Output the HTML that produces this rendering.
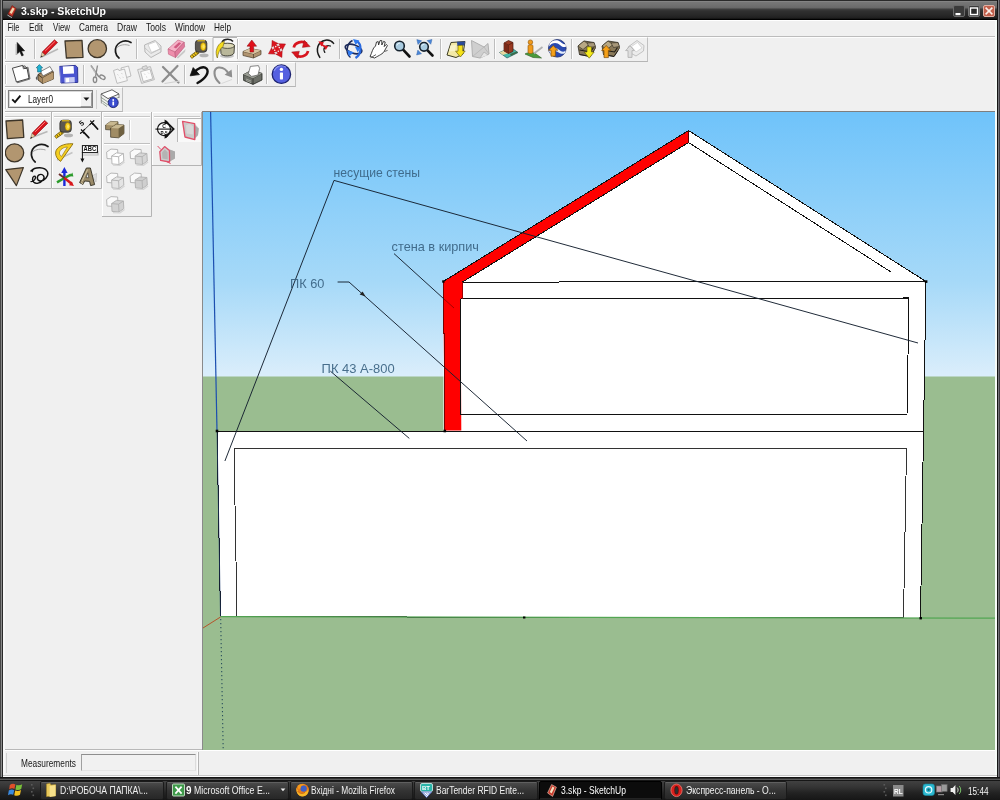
<!DOCTYPE html>
<html>
<head>
<meta charset="utf-8">
<title>3.skp - SketchUp</title>
<style>
html,body{margin:0;padding:0;}
body{width:1000px;height:800px;overflow:hidden;position:relative;background:#f0f0f0;font-family:"Liberation Sans",sans-serif;font-size:11px;color:#000;}
.abs{position:absolute;}
#titlebar{left:0;top:0;width:1000px;height:20px;background:linear-gradient(#2a2a2a 0px,#2a2a2a 0.7px,#8c8c8c 1.2px,#777 2px,#717171 5px,#696969 7.5px,#3c3c3c 9.5px,#303030 11px,#282828 15px,#1e1e1e 18.3px,#000 19px,#000 20px);}
#title{left:21px;top:3px;color:#fff;font-weight:bold;font-size:12px;letter-spacing:0.2px;text-shadow:0 0 2px #000;white-space:nowrap;}
#lborder{left:0;top:0;width:3px;height:779px;background:linear-gradient(90deg,#484848 0px,#484848 0.9px,#8a8a8a 1px,#8a8a8a 2px,#2a2a2a 2.1px,#2a2a2a 3px);}
#rborder{left:997px;top:0;width:3px;height:779px;background:linear-gradient(90deg,#161616 0px,#161616 1px,#75757a 1.1px,#75757a 2.2px,#403c42 2.3px,#403c42 3px);}
#bborder{left:0;top:775px;width:1000px;height:4px;background:linear-gradient(90deg,#484848 0px,#484848 0.9px,#8a8a8a 1px,#8a8a8a 2px,#2a2a2a 2.1px,#2a2a2a 3px,rgba(0,0,0,0) 3.1px,rgba(0,0,0,0) 997px,#161616 997.1px,#161616 998px,#75757a 998.1px,#75757a 999.2px,#403c42 999.3px) 0 0/1000px 2px no-repeat,linear-gradient(#c6c6c6 0px,#c6c6c6 0.7px,#fbfbfb 0.9px,#fbfbfb 2px,#141414 2.2px,#141414 3px,#303030 3.2px,#303030 4px);}
#menubar{left:2px;top:20px;width:995px;height:17px;background:#f0f0f0;border-top:1px solid #fff;border-bottom:1px solid #bcbcbc;box-sizing:border-box;}
.mi{position:absolute;top:22px;font-size:11px;color:#111;white-space:nowrap;}
.tb{position:absolute;background:#f0f0f0;border-top:1px solid #fff;border-bottom:1px solid #b5b5b5;border-right:1px solid #c0c0c0;box-sizing:border-box;}
.sep{position:absolute;width:1px;background:#c4c4c4;border-right:1px solid #fff;}
#viewport{left:203px;top:112px;width:792px;height:638px;overflow:hidden;will-change:transform;}
#taskbar{left:0;top:779px;width:1000px;height:21px;background:linear-gradient(#5a5a5a 0px,#5a5a5a 1px,#161616 1.2px,#161616 2px,#404040 2.4px,#343434 8px,#222 14px,#161616 21px);}
.tk{position:absolute;top:781px;height:18px;box-sizing:border-box;color:#e8e8e8;font-size:11px;white-space:nowrap;overflow:hidden;}
.tk span{position:absolute;top:2px;}
</style>
</head>
<body>
<!-- CHROME -->
<div class="abs" id="titlebar"></div>
<div class="abs" id="menubar"></div>

<!-- TOOLBARS -->
<div class="abs" style="left:3px;top:37px;width:994px;height:1px;background:#fdfdfd;"></div><div class="tb" id="tb1" style="left:3px;top:37px;width:645px;height:25px;"></div>
<div class="tb" id="tb2" style="left:3px;top:62px;width:293px;height:25px;"></div>
<div class="tb" id="tb3" style="left:3px;top:87px;width:120px;height:25px;"></div>
<!--ICONS--><svg class="abs" style="left:0;top:0;will-change:transform" width="1000" height="230" viewBox="0 0 1000 230">
<!--I1-->
<line x1="5.5" y1="39" x2="5.5" y2="59" stroke="#c8c8c8"/><line x1="6.5" y1="39" x2="6.5" y2="59" stroke="#fff"/>
<line x1="5.5" y1="65" x2="5.5" y2="84" stroke="#c8c8c8"/><line x1="6.5" y1="65" x2="6.5" y2="84" stroke="#fff"/>
<line x1="5.5" y1="90" x2="5.5" y2="109" stroke="#c8c8c8"/><line x1="6.5" y1="90" x2="6.5" y2="109" stroke="#fff"/>
<line x1="34.5" y1="39" x2="34.5" y2="59" stroke="#bdbdbd"/><line x1="35.5" y1="39" x2="35.5" y2="59" stroke="#fdfdfd"/>
<line x1="136.5" y1="39" x2="136.5" y2="59" stroke="#bdbdbd"/><line x1="137.5" y1="39" x2="137.5" y2="59" stroke="#fdfdfd"/>
<line x1="237.5" y1="39" x2="237.5" y2="59" stroke="#bdbdbd"/><line x1="238.5" y1="39" x2="238.5" y2="59" stroke="#fdfdfd"/>
<line x1="339.5" y1="39" x2="339.5" y2="59" stroke="#bdbdbd"/><line x1="340.5" y1="39" x2="340.5" y2="59" stroke="#fdfdfd"/>
<line x1="440.5" y1="39" x2="440.5" y2="59" stroke="#bdbdbd"/><line x1="441.5" y1="39" x2="441.5" y2="59" stroke="#fdfdfd"/>
<line x1="494.5" y1="39" x2="494.5" y2="59" stroke="#bdbdbd"/><line x1="495.5" y1="39" x2="495.5" y2="59" stroke="#fdfdfd"/>
<line x1="571.5" y1="39" x2="571.5" y2="59" stroke="#bdbdbd"/><line x1="572.5" y1="39" x2="572.5" y2="59" stroke="#fdfdfd"/>
<line x1="83.5" y1="65" x2="83.5" y2="84" stroke="#bdbdbd"/><line x1="84.5" y1="65" x2="84.5" y2="84" stroke="#fdfdfd"/>
<line x1="184.5" y1="65" x2="184.5" y2="84" stroke="#bdbdbd"/><line x1="185.5" y1="65" x2="185.5" y2="84" stroke="#fdfdfd"/>
<line x1="237.5" y1="65" x2="237.5" y2="84" stroke="#bdbdbd"/><line x1="238.5" y1="65" x2="238.5" y2="84" stroke="#fdfdfd"/>
<line x1="266.5" y1="65" x2="266.5" y2="84" stroke="#bdbdbd"/><line x1="267.5" y1="65" x2="267.5" y2="84" stroke="#fdfdfd"/>
<path d="M17.2,42.5 L17.2,54 L19.8,51.6 L21.8,56 L23.4,55.2 L21.4,51 L24.6,50.8 Z" fill="#111" stroke="#111" stroke-width="0.6"/><path d="M16,44 L16,55 L18,53" fill="none" stroke="#999" stroke-width="1" opacity="0.6"/>
<g><path d="M41.5,57 L58,49" stroke="#b8b8b8" stroke-width="1.6"/><path d="M54.5,39.8 L57.6,42.6 L45,55 L42,52.2 Z" fill="#d8141c" stroke="#8a0a10" stroke-width="0.6"/><path d="M55.2,41.2 L45.2,51" stroke="#ff8a8a" stroke-width="0.9"/><path d="M42,52.2 L45,55 L40.6,57.4 Z" fill="#e8c9a0" stroke="#5a4a3a" stroke-width="0.4"/><path d="M41.6,55.6 L40.4,57.6 L42.6,56.6Z" fill="#222"/></g>
<path d="M65,41 L82,40.3 L83,57.4 L66.4,58 Z" fill="#b29670" stroke="#3c3428" stroke-width="1.3" stroke-linejoin="round"/>
<ellipse cx="97.3" cy="48.7" rx="9.2" ry="9" fill="#b29670" stroke="#3c3428" stroke-width="1.3"/>
<path d="M131,42.5 C124,38.5 114.5,43 115.5,52 C116,55 117.5,57 119,58" fill="none" stroke="#1a1a1a" stroke-width="1.7" stroke-linecap="round"/><path d="M116.5,48 C120,44.5 125,44 129.5,45.5" fill="none" stroke="#999" stroke-width="0.9"/>
<g opacity="0.9"><path d="M144.5,45 L155,40.5 L161,46 L161,52 L151,57.5 L145,52 Z" fill="#e9e9e9" stroke="#b0b0b0" stroke-width="1"/><path d="M148,44.5 L156,41.6 L160,49 L151.5,52.5 Z" fill="#fff" stroke="#c4c4c4" stroke-width="0.8"/><path d="M145,48 L151,53.5 L161,48.5" fill="none" stroke="#b8b8b8" stroke-width="0.8"/></g>
<g><path d="M176.5,57.6 L185.6,49 L185,52 L178,58.4Z" fill="#c8c8c8"/><path d="M168,49 L178,40 L184.2,42.2 L175,52Z" fill="#f6b0c6" stroke="#c0607e" stroke-width="0.6" stroke-linejoin="round"/><path d="M168,49 L175,52 L175.5,57.6 L168.5,54.2Z" fill="#ee8eac" stroke="#c0607e" stroke-width="0.6" stroke-linejoin="round"/><path d="M175,52 L184.2,42.2 L184.6,46.8 L175.5,57.6Z" fill="#e07a9c" stroke="#b85474" stroke-width="0.6" stroke-linejoin="round"/><path d="M173.6,47.2 L179,42.2 L181.2,43.2 L176,48.4Z" fill="#d05a80"/></g>
<g><ellipse cx="204" cy="55.4" rx="4.6" ry="1.8" fill="#b4b4b4"/><path d="M196.8,50.8 L190.2,56 L191.8,58.4 L199,53.2 Z" fill="#f2c81a" stroke="#5a480c" stroke-width="0.7"/><path d="M192.4,54.8 L193.8,57 M194.4,53.4 L195.8,55.6 M196.4,52 L197.6,54" stroke="#3a2e06" stroke-width="0.7"/><rect x="195.4" y="40.2" width="11.4" height="12" rx="3" fill="#5c5850" stroke="#2a2824" stroke-width="0.8"/><path d="M197.4,40.8 L205,40.8" stroke="#e8c01c" stroke-width="1.2"/><ellipse cx="203.2" cy="46.6" rx="2.7" ry="4" fill="#f7cf1c" stroke="#8a680c" stroke-width="0.6"/><ellipse cx="203.6" cy="46.6" rx="1.1" ry="2" fill="#fbe46a"/></g>
<rect x="213" y="37" width="24" height="24" fill="#f8f8f8"/><path d="M213,61 L213,37.5 L237,37.5" fill="none" stroke="#b4b4b4" stroke-width="1"/>
<g><ellipse cx="227" cy="56" rx="7" ry="2.2" fill="#c4c4c4"/><path d="M220.5,46 C220.5,43.5 234,42.5 234.5,45.5 L234,53 C233,56.5 222,57 221,53.6 Z" fill="#b9b79a" stroke="#3a3a30" stroke-width="0.9"/><ellipse cx="227.5" cy="45.8" rx="7" ry="2.6" fill="#ddd9b6" stroke="#3a3a30" stroke-width="0.8"/><path d="M222,42 C224,38.5 231,38.5 233,41.5" fill="none" stroke="#222" stroke-width="1.5"/><path d="M224.5,41.5 C220,42 217,46 216.2,51.5 C216,54 216.6,57 217.4,58 C217.8,54 219.6,49 223,46.5 Z" fill="#f5dc1e" stroke="#6a5c10" stroke-width="0.6"/></g>
<g><path d="M243,51.5 L250,48.5 L261,50.5 L261,54.5 L253.5,58 L243,55.5 Z" fill="#b09470" stroke="#4a3c2a" stroke-width="0.7"/><path d="M243,51.5 L253.5,54 L261,50.5 M253.5,54 L253.5,58" fill="none" stroke="#4a3c2a" stroke-width="0.7"/><path d="M243,51.5 L250,48.5 L261,50.5 L253.5,54 Z" fill="#d6c3a0"/><path d="M251.8,40 L256.6,46.2 L253.6,46.2 L253.6,52 L250,52 L250,46.2 L247,46.2 Z" fill="#e0101a" stroke="#8a0a10" stroke-width="0.5"/></g>
<g><path d="M274.5,48.2 L273.5,45.6 L271.8,47.3 L272.1,40.4 L278.2,43.6 L275.9,44.2 L277.7,46.4 L277.7,46.4 L280.3,45.4 L278.6,43.7 L285.5,44.0 L282.3,50.1 L281.7,47.8 L279.5,49.6 L279.5,49.6 L280.5,52.2 L282.2,50.5 L281.9,57.4 L275.8,54.2 L278.1,53.6 L276.3,51.4 L276.3,51.4 L273.7,52.4 L275.4,54.1 L268.5,53.8 L271.7,47.7 L272.3,50.0 L274.5,48.2Z" fill="#dc141e" stroke="#a00a12" stroke-width="0.5" stroke-linejoin="round"/><circle cx="275.7" cy="46.6" r="0.8" fill="#fff" opacity="0.9"/><circle cx="279.3" cy="47.6" r="0.8" fill="#fff" opacity="0.9"/><circle cx="278.3" cy="51.2" r="0.8" fill="#fff" opacity="0.9"/><circle cx="274.7" cy="50.2" r="0.8" fill="#fff" opacity="0.9"/></g>
<g fill="none" stroke="#d8141e" stroke-width="2.7"><path d="M293.8,47.6 C294.8,42.4 302.4,40.2 306.6,43.8"/><path d="M308,51 C307,56.4 299.4,58.4 295.2,54.8"/></g><path d="M304.2,40.2 L310.2,46.6 L302.4,47.4 Z" fill="#d8141e" stroke="#8a0a10" stroke-width="0.4"/><path d="M297.6,58.4 L291.6,52 L299.4,51.2 Z" fill="#d8141e" stroke="#8a0a10" stroke-width="0.4"/>
<g fill="none" stroke-linecap="round"><path d="M319.8,57.4 C315,50 317.6,41.6 325.6,40.2 C329,39.8 332,41.4 333.6,43.4" stroke="#1a1a1a" stroke-width="1.5"/><path d="M324.8,52.4 C322.4,48 325.6,44.4 330.4,46" stroke="#1a1a1a" stroke-width="1.3"/></g><path d="M318.4,41.2 L324,42.2 L321.4,46.6 Z" fill="#dc141e"/><path d="M321,44 L324.4,46.4" stroke="#dc141e" stroke-width="1.6"/><path d="M323,45.2 L328.2,46 L325.8,50 Z" fill="#dc141e"/>
<g fill="none"><ellipse cx="353.5" cy="49" rx="8.6" ry="4.2" transform="rotate(18 353.5 49)" stroke="#1c2a5a" stroke-width="1.7"/><path d="M356.5,41 C362,44 362,54 355.5,58" stroke="#2a6ae0" stroke-width="2.2"/><path d="M350.5,57.5 C345.5,53.5 346,44 352.5,40.5" stroke="#1c2a5a" stroke-width="1.5"/></g><path d="M353,39 L359.4,40.4 L355.6,45 Z" fill="#2f7af0"/><path d="M347.2,50 L353.8,52.2 L349,56.6 Z" fill="#2f7af0"/><path d="M360.4,47.6 L354.8,46.4 L357.8,52.6Z" fill="#2f7af0"/>
<g><path d="M370,56.5 C372,53 372.5,48 375.5,46 L376.5,42 L378.2,41.6 L378.6,45 L380,40.6 L381.8,40.6 L381.8,45 L383.6,41.4 L385.2,42 L384.2,46.6 L386.4,44.4 L387.4,45.6 L384.4,51 C383.4,53.6 379,55.4 374.6,58 Z" fill="#fff" stroke="#2a2a2a" stroke-width="0.9" stroke-linejoin="round"/><path d="M370.6,57.8 L376,54.6 M384.2,51.6 L387.6,50.4" stroke="#555" stroke-width="0.9" fill="none"/></g>
<line x1="402.86" y1="49.36" x2="409.5" y2="56.5" stroke="#111" stroke-width="2.6" stroke-linecap="round"/><circle cx="399.5" cy="46" r="4.8" fill="#a9cbe0" stroke="#16222e" stroke-width="1.6"/><path d="M396.86,45.52 A2.88,2.88 0 0 1 399.98,43.12" stroke="#e4f2fa" stroke-width="1" fill="none"/>
<line x1="427.01" y1="49.809999999999995" x2="432.5" y2="55.5" stroke="#111" stroke-width="2.6" stroke-linecap="round"/><circle cx="424" cy="46.8" r="4.3" fill="#a9cbe0" stroke="#16222e" stroke-width="1.6"/><path d="M421.635,46.37 A2.5799999999999996,2.5799999999999996 0 0 1 424.43,44.22" stroke="#e4f2fa" stroke-width="1" fill="none"/>
<path d="M416.8,39.6 L421.7,40.8 L418.0,44.5 Z" fill="#4a86d8" stroke="#2a5aa0" stroke-width="0.4"/>
<path d="M432.0,39.4 L430.8,44.3 L427.1,40.6 Z" fill="#4a86d8" stroke="#2a5aa0" stroke-width="0.4"/>
<path d="M416.6,55.0 L417.8,50.1 L421.5,53.8 Z" fill="#4a86d8" stroke="#2a5aa0" stroke-width="0.4"/>
<g><path d="M447,55 L451,42.5 L465,41.5 L463,54 L456,57.5 Z" fill="#f3e9a6" stroke="#3a3a20" stroke-width="1"/><path d="M450.4,45.5 L456,45 L455,51 L449,51.4Z" fill="#f9f3c8"/><path d="M457,41.8 L465,41.4 L464.4,45.6 L457.4,46 Z" fill="#2a4a9a"/><path d="M458,45.4 L462.6,45.2 L462.6,51 L465.2,51 L460.4,57 L455.6,51.2 L458,51.2 Z" fill="#f5e21a" stroke="#5a5208" stroke-width="0.6"/></g>
<g><path d="M471.5,40.5 L484,47 L488,43.5 L489,54 L480,58 L472.5,56.5 Z" fill="#cfcfcf" stroke="#a9a9a9" stroke-width="0.9"/><path d="M472.5,56.5 L484,47 L489,54" fill="none" stroke="#b5b5b5" stroke-width="0.8"/><path d="M480,58 L484,52 L488,55" fill="#e6e6e6" stroke="#aaa" stroke-width="0.7"/></g>
<g><path d="M499.5,52.5 L511,47.5 L518,52.5 L507,58 Z" fill="#44b8a8" stroke="#2a5a5a" stroke-width="0.7"/><path d="M499.5,52.5 L509,48.4 L511.5,52 L503,55 Z" fill="#e8d8a0"/><path d="M510,54 L516.5,51.6 L518,52.5 L511,56 Z" fill="#3a6a4a"/><path d="M504,43 L508.5,40.5 L513,42.5 L513,51.5 L508.5,53.5 L504,51 Z" fill="#9a3a22" stroke="#4a1a10" stroke-width="0.7"/><path d="M504,43 L508.5,45 L513,42.5 M508.5,45 L508.5,53.5" fill="none" stroke="#4a1a10" stroke-width="0.7"/><path d="M504,43 L508.5,45 L508.5,53.5 L504,51Z" fill="#7a2a18"/></g>
<g><path d="M525,54 C528,52 534,52 536,54 L541.5,58 L533,57.5 Z" fill="#4a9a3a" stroke="#2a5a22" stroke-width="0.6"/><path d="M534,53.5 L542.5,47" stroke="#b0b0b0" stroke-width="1.8"/><circle cx="530.4" cy="42.2" r="2.3" fill="#f09a1c" stroke="#8a5208" stroke-width="0.6"/><path d="M528,45.5 C528,44.5 533,44.5 533,45.5 L533,52 C533,54 528,54 528,52 Z" fill="#f09a1c" stroke="#8a5208" stroke-width="0.6"/></g>
<g><circle cx="557.3" cy="48.3" r="8.8" fill="#2a4ab0" stroke="#1a2a6a" stroke-width="0.8"/><path d="M549,46.5 C552,42 557,42 560,45 C562.5,47.5 565,47.5 566,46.5 L565.6,44 C563.6,44.8 562,43.2 560,41.6 C556.6,39 551.4,40.6 549.6,43.8 Z" fill="#fff"/><path d="M549,51 C552,47 556.4,47.4 559,49.8 C561.6,52.2 564.4,52 565.8,50.6 L565,53 C563,54.4 560.6,54 558.6,52.4 C555.8,50.2 552.6,51 550.4,54 Z" fill="#e4ecfa"/><path d="M548.6,50.2 L553.2,45.6 L557.8,50.2 L555.4,50.2 L555.4,56.2 L551,56.2 L551,50.2 Z" fill="#f5a018" stroke="#7a4a08" stroke-width="0.7"/></g>
<g><path d="M578,46 L584,41 L594,42.5 L595.5,48 L590,56.5 L579.5,54.5 Z" fill="#8a7a5a" stroke="#2e2a20" stroke-width="0.8"/><path d="M578,46 L583,49.5 L589,44.5 L584,41Z" fill="#b8a884" stroke="#2e2a20" stroke-width="0.6"/><path d="M587,43 L594,42.5 L595.5,46.5 L589.5,47.5Z" fill="#a8987a" stroke="#2e2a20" stroke-width="0.6"/><path d="M579.5,50 L590.5,52 L593.5,47.5" fill="none" stroke="#1e1a14" stroke-width="1.1"/><path d="M579.5,54.5 L590,56.5 L594,50.5" fill="none" stroke="#1e1a14" stroke-width="0.9"/></g>
<path d="M587,46.8 L591.4,46.8 L591.4,52 L594.2,52 L589.2,58.2 L584.2,52 L587,52 Z" fill="#f5ea1a" stroke="#5a5208" stroke-width="0.6"/>
<g><path d="M602,46 L608,41 L618,42.5 L619.5,48 L614,56.5 L603.5,54.5 Z" fill="#8a7a5a" stroke="#2e2a20" stroke-width="0.8"/><path d="M602,46 L607,49.5 L613,44.5 L608,41Z" fill="#b8a884" stroke="#2e2a20" stroke-width="0.6"/><path d="M611,43 L618,42.5 L619.5,46.5 L613.5,47.5Z" fill="#a8987a" stroke="#2e2a20" stroke-width="0.6"/><path d="M603.5,50 L614.5,52 L617.5,47.5" fill="none" stroke="#1e1a14" stroke-width="1.1"/><path d="M603.5,54.5 L614,56.5 L618,50.5" fill="none" stroke="#1e1a14" stroke-width="0.9"/></g>
<path d="M601.6,50.4 L606.2,45.4 L610.8,50.4 L608.4,50.4 L608.4,57.6 L604,57.6 L604,50.4 Z" fill="#f5a018" stroke="#7a4a08" stroke-width="0.7"/>
<g><path d="M628,47 L637,40.5 L644,45.5 L643.5,51 L636,56 L630.5,53 Z" fill="#ececec" stroke="#bcbcbc" stroke-width="0.9"/><path d="M631.5,46.5 L637.5,42.4 L642,48 L636,52Z" fill="#fff" stroke="#ccc" stroke-width="0.7"/><path d="M625.6,50.6 L630,45.8 L634.4,50.6 L632,50.6 L632,57.4 L628,57.4 L628,50.6 Z" fill="#dedede" stroke="#adadad" stroke-width="0.8"/></g>
<!--I2-->
<g><path d="M13.5,69 L25,65.8 L26,67.6 L28,67.2 L30,79 L17.5,82.8 Z" fill="#cfcfcf" stroke="#555" stroke-width="0.8"/><path d="M12.4,68.2 L22.6,65.4 L24.6,68.4 L27,68 L29,78.4 L16.4,82 Z" fill="#fff" stroke="#333" stroke-width="0.9" stroke-linejoin="round"/><path d="M22.6,65.4 L23.4,68.8 L27,68" fill="none" stroke="#333" stroke-width="0.7"/></g>
<g><path d="M38,74.5 L49,68.5 L53.5,72 L53.5,79 L42.5,83.5 L38,80 Z" fill="#a88a62" stroke="#2e2618" stroke-width="0.8"/><path d="M40.5,71.5 L50,66.5 L52.5,71 L43,76Z" fill="#fff" stroke="#555" stroke-width="0.7"/><path d="M38,74.5 L42.5,78 L53.5,72 M42.5,78 L42.5,83.5" fill="none" stroke="#2e2618" stroke-width="0.8"/><path d="M42.5,78 L53.5,72 L53.5,79 L42.5,83.5Z" fill="#b89a70"/><path d="M37,80.5 L38,74.5 L35.6,78Z" fill="#555"/><path d="M39.4,64.6 L42.6,67.8 L41.2,67.8 L41.2,72 L37.6,72 L37.6,67.8 L36.2,67.8 Z" fill="#1fb4d4" stroke="#0a5a70" stroke-width="0.6"/></g>
<g><path d="M59.6,66.4 L75.4,65.4 L77.6,67.4 L77.8,82.4 L61,83 Z" fill="#4a54d0" stroke="#222a8a" stroke-width="0.9" stroke-linejoin="round"/><path d="M62.8,66.6 L73.6,66 L74,73.4 L63.2,74Z" fill="#fff"/><path d="M64.4,77.4 L74.6,77 L74.8,82.4 L64.6,82.8Z" fill="#c8ccf4"/><path d="M66,78.2 L69,78.1 L69.1,82 L66.1,82.2Z" fill="#fff"/><path d="M61,83 L59.6,66.4" stroke="#8a92f0" stroke-width="0.8"/></g>
<g fill="none" stroke="#8a8a8a" stroke-width="1.35"><path d="M91,65.5 L99,77"/><path d="M97.5,65.5 L95.5,76.5"/><ellipse cx="95" cy="79.8" rx="1.7" ry="2.8"/><ellipse cx="102.4" cy="77.2" rx="2.9" ry="1.8" transform="rotate(30 102.4 77.2)"/></g><path d="M91,65.5 L95.8,72.6 L94.4,72.2Z" fill="#e0e0e0" stroke="#aaa" stroke-width="0.5"/>
<g fill="#f6f6f6" stroke="#b8b8b8" stroke-width="0.9"><path d="M121,68 L128.5,66 L131,76 L123.5,78.5Z"/><path d="M113.5,70.5 L118,69 L119,70.6 L124.5,69 L127.4,80.6 L117,83.4Z"/><path d="M117.4,74.2 L118.4,75.4 M121.4,73 L122.4,74.2 M119.4,77.4 L120.6,78.4 M122.6,76.8 L123.4,77.8" stroke="#c8c8c8" stroke-width="0.8"/></g>
<g fill="#f6f6f6" stroke="#b4b4b4" stroke-width="0.9"><path d="M137.6,69.6 L150.4,66.6 L154.4,79.6 L141.6,83.4Z" fill="#eaeaea"/><path d="M142,67 L146.4,65.6 L147.6,68.4 L143,69.8Z" fill="#ddd"/><path d="M140.6,71.6 L150,69.2 L152.8,78.8 L143.2,81.6Z" fill="#fbfbfb"/><path d="M144.2,73.6 L145.2,74.8 M148,72.6 L149,73.6 M146,76.6 L147.2,77.4" stroke="#c8c8c8" stroke-width="0.8"/></g>
<g stroke="#8c8c8c" stroke-width="2.2" stroke-linecap="round"><path d="M163,67 L178.5,82.5"/><path d="M177.5,66 L162.5,81.5"/></g><path d="M164.5,83.5 L180,81" stroke="#d0d0d0" stroke-width="1.2"/>
<path d="M197.5,83 C206,78.5 209.5,72 206.5,68.5 C203.5,65.5 197,68.5 194,73" fill="none" stroke="#111" stroke-width="2.4" stroke-linecap="round"/><path d="M190.2,75.8 L193.2,67.6 L199.4,74.6 Z" fill="#111" stroke="#111" stroke-width="0.8" stroke-linejoin="round"/>
<path d="M219.5,83 C213,77 213,68.5 218.5,67.5 C223,67 227,70.5 229,74.5" fill="none" stroke="#8e8e8e" stroke-width="2.1" stroke-linecap="round"/><path d="M232.2,77.4 L231.6,69.6 L224.6,74.8 Z" fill="#8e8e8e"/><path d="M221.5,83.5 L232,79.5" stroke="#d8d8d8" stroke-width="1"/>
<g><path d="M243.6,74.5 L252,70 L262,73.4 L262,80 L253,84.4 L243.6,80.4 Z" fill="#6c6f68" stroke="#22241f" stroke-width="0.8"/><path d="M243.6,74.5 L253,78.4 L262,73.4 M253,78.4 L253,84.4" fill="none" stroke="#22241f" stroke-width="0.7"/><path d="M243.6,74.5 L252,70 L262,73.4 L253,78.4Z" fill="#9a9d94"/><path d="M248.4,73.6 L250.4,66.4 L258.4,65.6 L259.6,68.4 L258,75 L251.6,76.4Z" fill="#fff" stroke="#555" stroke-width="0.7"/><path d="M246,79 L251,81 M246,80.6 L251,82.6" stroke="#c8cac0" stroke-width="0.6"/></g>
<circle cx="281.4" cy="74.2" r="9.2" fill="#5560e0" stroke="#1c2270" stroke-width="1.3"/><path d="M274,71 A8,8 0 0 1 286,67.2" stroke="#8a94f4" stroke-width="1.2" fill="none"/><circle cx="281.4" cy="69.4" r="1.7" fill="#fff"/><rect x="279.9" y="72.4" width="3.1" height="7" rx="0.6" fill="#fff"/>
<rect x="8.5" y="90.5" width="84" height="17" fill="#fff" stroke="#7f7f7f"/><rect x="9.5" y="91.5" width="82" height="15" fill="none" stroke="#d8d8d8"/>
<path d="M12.2,99.4 L15,102.2 L20.4,95.6" fill="none" stroke="#111" stroke-width="1.9"/>
<rect x="80" y="92" width="12" height="15" fill="#f0f0f0"/><path d="M80.5,106.5 L80.5,92.5 L91.5,92.5" fill="none" stroke="#fff"/><path d="M80.5,106.5 L91.5,106.5 L91.5,92.5" fill="none" stroke="#9a9a9a"/><path d="M83.4,97.6 L89.4,97.6 L86.4,100.8Z" fill="#111"/>
<line x1="96.5" y1="90" x2="96.5" y2="109" stroke="#d0d0d0"/>
<g><path d="M101,94 L112,89.8 L119,94 L108,98.6Z" fill="#fff" stroke="#3a3a3a" stroke-width="0.8"/><path d="M101,97.4 L108,102 L119,97.2" fill="none" stroke="#8a9a8a" stroke-width="0.9"/><path d="M101.4,100.4 L108,105 L112,103.4" fill="none" stroke="#8a9a8a" stroke-width="0.9"/><path d="M102.4,103.2 L107,106.6" fill="none" stroke="#8a9a8a" stroke-width="0.9"/><path d="M101,94 L101.4,103.4 M119,94 L119,98" stroke="#666" stroke-width="0.7"/><circle cx="113.2" cy="102.6" r="5" fill="#3a4cd0" stroke="#1c2270" stroke-width="0.9"/><circle cx="113.2" cy="100" r="0.9" fill="#fff"/><rect x="112.4" y="101.6" width="1.7" height="3.8" fill="#fff"/></g>
<!--I3-->
<rect x="3" y="112" width="49" height="77" fill="#f0f0f0"/><path d="M3.5,189 L3.5,112.5 L52,112.5" fill="none" stroke="#fff"/><path d="M3,188.5 L51.5,188.5 L51.5,112" fill="none" stroke="#b4b4b4"/><line x1="5" y1="116.5" x2="50" y2="116.5" stroke="#c8c8c8"/><line x1="5" y1="117.5" x2="50" y2="117.5" stroke="#fff"/>
<rect x="52" y="112" width="50" height="77" fill="#f0f0f0"/><path d="M52.5,189 L52.5,112.5 L102,112.5" fill="none" stroke="#fff"/><path d="M52,188.5 L101.5,188.5 L101.5,112" fill="none" stroke="#b4b4b4"/><line x1="54" y1="116.5" x2="100" y2="116.5" stroke="#c8c8c8"/><line x1="54" y1="117.5" x2="100" y2="117.5" stroke="#fff"/>
<rect x="102" y="112" width="50" height="105" fill="#f0f0f0"/><path d="M102.5,217 L102.5,112.5 L152,112.5" fill="none" stroke="#fff"/><path d="M102,216.5 L151.5,216.5 L151.5,112" fill="none" stroke="#b4b4b4"/><line x1="104" y1="116.5" x2="150" y2="116.5" stroke="#c8c8c8"/><line x1="104" y1="117.5" x2="150" y2="117.5" stroke="#fff"/>
<rect x="152" y="112" width="50" height="54" fill="#f0f0f0"/><path d="M152.5,166 L152.5,112.5 L202,112.5" fill="none" stroke="#fff"/><path d="M152,165.5 L201.5,165.5 L201.5,112" fill="none" stroke="#b4b4b4"/><line x1="154" y1="116.5" x2="200" y2="116.5" stroke="#c8c8c8"/><line x1="154" y1="117.5" x2="200" y2="117.5" stroke="#fff"/>
<path d="M6,121 L22.6,120 L23.8,137.4 L7.4,138.6 Z" fill="#b29670" stroke="#3c3428" stroke-width="1.3" stroke-linejoin="round"/>
<g><path d="M30.5,138 L47.5,131.5" stroke="#b8b8b8" stroke-width="1.6"/><path d="M44.6,120.4 L47.8,123.2 L35,136 L32,133.2 Z" fill="#d8141c" stroke="#8a0a10" stroke-width="0.6"/><path d="M45.2,121.8 L35.2,131.8" stroke="#ff8a8a" stroke-width="0.9"/><path d="M32,133.2 L35,136 L30.4,138.6 Z" fill="#e8c9a0" stroke="#5a4a3a" stroke-width="0.4"/><path d="M31.4,136.8 L30.2,138.8 L32.4,137.8Z" fill="#222"/></g>
<ellipse cx="14.5" cy="152.8" rx="9.2" ry="9" fill="#b29670" stroke="#3c3428" stroke-width="1.3"/>
<path d="M48,146.5 C41,141.5 31,146 31.4,155 C31.8,158.4 33.4,160.6 35.2,162" fill="none" stroke="#1a1a1a" stroke-width="1.7" stroke-linecap="round"/><path d="M32.5,152 C36,149 41,148.6 45.5,150" fill="none" stroke="#999" stroke-width="0.9"/>
<path d="M5.8,169.6 L23.4,167.6 L16.4,185.6 Z" fill="#b29670" stroke="#3c3428" stroke-width="1.2" stroke-linejoin="round"/>
<path d="M31,171 C35,166.5 45,166.5 47.6,172 C49,176 44,181.5 40,181 C36.5,180.4 36.6,175.6 39.6,174.6 C43,173.6 45.6,177 43,180 C40,183.4 36,184.4 33.6,182 C31,179 33.6,175 35.2,176.4 C36.4,178 34,181.6 31,181.6" fill="none" stroke="#111" stroke-width="1.4" stroke-linecap="round"/><path d="M30.6,170.2 L33.6,169.4 L32.6,172.4Z" fill="#111"/>
<g transform="translate(-135.5,80)"><ellipse cx="204" cy="55.4" rx="4.6" ry="1.8" fill="#b4b4b4"/><path d="M196.8,50.8 L190.2,56 L191.8,58.4 L199,53.2 Z" fill="#f2c81a" stroke="#5a480c" stroke-width="0.7"/><path d="M192.4,54.8 L193.8,57 M194.4,53.4 L195.8,55.6 M196.4,52 L197.6,54" stroke="#3a2e06" stroke-width="0.7"/><rect x="195.4" y="40.2" width="11.4" height="12" rx="3" fill="#5c5850" stroke="#2a2824" stroke-width="0.8"/><path d="M197.4,40.8 L205,40.8" stroke="#e8c01c" stroke-width="1.2"/><ellipse cx="203.2" cy="46.6" rx="2.7" ry="4" fill="#f7cf1c" stroke="#8a680c" stroke-width="0.6"/><ellipse cx="203.6" cy="46.6" rx="1.1" ry="2" fill="#fbe46a"/></g>
<g fill="none" stroke="#111" stroke-linecap="round"><path d="M82.8,131.3 L91.9,122.5" stroke-width="0.8"/><path d="M83.6,132.2 L88.8,137.6" stroke-width="1.7"/><path d="M92.8,123.6 L97.6,129" stroke-width="1.7"/><path d="M80.6,133.2 L84.6,129.4 M81.4,129.8 L83.8,133" stroke-width="1.3"/><path d="M89.8,124.6 L93.8,120.8 M90.6,121 L93,124.4" stroke-width="1.3"/></g><text x="0" y="0" transform="translate(81.4,126.6) rotate(-38)" font-family="Liberation Sans, sans-serif" font-size="7.5" font-weight="bold" fill="#111">5</text>
<g><path d="M57,160 L72.5,152.5" stroke="#c4c4c4" stroke-width="1.5"/><path d="M55.6,153 C55.6,147 64,143 73,143.8 L60.6,161.4 C57.6,159.6 55.6,156.4 55.6,153 Z" fill="#f5cf20" stroke="#8a6c0c" stroke-width="0.9" stroke-linejoin="round"/><path d="M59.4,153 C59.6,149.6 63.4,147.2 67.4,147 L61.6,156.4 C60.2,155.6 59.4,154.4 59.4,153Z" fill="#f0f0f0" stroke="#8a6c0c" stroke-width="0.6"/></g>
<g><path d="M83,155 L98,155 L98,151" fill="none" stroke="#bcbcbc" stroke-width="1.2"/><rect x="82.4" y="145.6" width="15" height="7" fill="#fff" stroke="#111" stroke-width="1"/><text x="83.6" y="151.4" font-family="Liberation Sans, sans-serif" font-size="6.4" font-weight="bold" fill="#111" textLength="12.6" lengthAdjust="spacingAndGlyphs">ABC</text><path d="M82.4,152 L82.4,159" stroke="#111" stroke-width="1"/><path d="M80.4,158.4 L84.4,158.4 L82.4,162.4Z" fill="#111"/></g>
<g><path d="M64.4,186 L64.4,172" stroke="#1c2ad8" stroke-width="2.4"/><path d="M61.2,173 L64.4,167 L67.6,173Z" fill="#1c2ad8"/><path d="M64.4,178 L57,182.4" stroke="#2a9a2a" stroke-width="2.4"/><path d="M64.4,178 L71,174.6" stroke="#2a9a2a" stroke-width="2.4"/><path d="M72.4,172.4 L73.4,176.6 L69.4,176.2Z" fill="#2a9a2a"/><path d="M64.4,178 L72,184" stroke="#d8181c" stroke-width="2.6"/><path d="M74,186 L69,185.2 L71.6,181.6Z" fill="#d8181c"/><path d="M64.4,178 L59,174" stroke="#6a2a2a" stroke-width="2"/></g>
<g><path d="M92,176 L96.6,173.4 L96,182Z" fill="#ddd" stroke="#bbb" stroke-width="0.6"/><path d="M79.6,182.6 L86.4,168 L90.4,168 L94.6,184.6 L90.6,185.6 L89.6,181.4 L84.6,181 L83,184.4 Z" fill="#9a8a68" stroke="#2e2a1e" stroke-width="0.9" stroke-linejoin="round"/><path d="M86,177.6 L88.8,177.8 L87.8,172.8Z" fill="#f0f0f0" stroke="#2e2a1e" stroke-width="0.6"/><path d="M82,181.4 L87.6,169.6 M81,182.6 L83.4,183.8" stroke="#d8ccaa" stroke-width="0.9" fill="none"/></g>
<g><path d="M105.6,125 L110.6,121.4 L118,121.8 L118,126 L113,130 L105.6,129.6Z" fill="#a08c64" stroke="#3e3624" stroke-width="0.7"/><path d="M110.6,128 L116.4,124.4 L124,125 L124,133.6 L118.6,137.8 L110.6,137.2Z" fill="#a08c64" stroke="#3e3624" stroke-width="0.7"/><path d="M105.6,125 L110.6,121.4 L118,121.8 L113.4,125.4Z" fill="#c8b890"/><path d="M110.6,128 L116.4,124.4 L124,125 L118.6,128.6Z" fill="#c8b890"/><path d="M118.6,128.6 L118.6,137.8 L124,133.6 L124,125Z" fill="#6e6040"/></g>
<line x1="129.5" y1="120" x2="129.5" y2="140" stroke="#c8c8c8"/><line x1="130.5" y1="120" x2="130.5" y2="140" stroke="#fff"/>
<line x1="104" y1="143.5" x2="150" y2="143.5" stroke="#c0c0c0"/><line x1="104" y1="144.5" x2="150" y2="144.5" stroke="#fff"/>
<g fill="#fafafa" stroke="#b0b0b0" stroke-width="0.9"><path d="M106.6,152.1 L111,149.1 L117.6,149.5 L118,156.1 L113.4,158.9 L107,158.5 Z"/><path d="M111.6,156.1 L116.4,152.9 L123.4,153.5 L123.8,161.1 L119,164.5 L112,163.9 Z" fill="#fff"/><path d="M111.6,156.1 L118.6,156.7 L123.4,153.5 M118.6,156.7 L119,164.5" fill="none"/><path d="M113,165.1 L120,165.5 L124.6,162.1" fill="none" stroke="#d4d4d4" stroke-width="1.2"/></g>
<g fill="#fafafa" stroke="#b0b0b0" stroke-width="0.9"><path d="M130.1,152.1 L134.5,149.1 L141.1,149.5 L141.5,156.1 L136.9,158.9 L130.5,158.5 Z"/><path d="M135.1,156.1 L139.9,152.9 L146.9,153.5 L147.3,161.1 L142.5,164.5 L135.5,163.9 Z" fill="#d6d6d6"/><path d="M135.1,156.1 L142.1,156.7 L146.9,153.5 M142.1,156.7 L142.5,164.5" fill="none"/><path d="M136.5,165.1 L143.5,165.5 L148.1,162.1" fill="none" stroke="#d4d4d4" stroke-width="1.2"/></g>
<g fill="#fafafa" stroke="#b0b0b0" stroke-width="0.9"><path d="M106.6,176.1 L111,173.1 L117.6,173.5 L118,180.1 L113.4,182.9 L107,182.5 Z"/><path d="M111.6,180.1 L116.4,176.9 L123.4,177.5 L123.8,185.1 L119,188.5 L112,187.9 Z" fill="#e4e4e4"/><path d="M111.6,180.1 L118.6,180.7 L123.4,177.5 M118.6,180.7 L119,188.5" fill="none"/><path d="M113,189.1 L120,189.5 L124.6,186.1" fill="none" stroke="#d4d4d4" stroke-width="1.2"/></g>
<g fill="#fafafa" stroke="#b0b0b0" stroke-width="0.9"><path d="M130.1,176.1 L134.5,173.1 L141.1,173.5 L141.5,180.1 L136.9,182.9 L130.5,182.5 Z"/><path d="M135.1,180.1 L139.9,176.9 L146.9,177.5 L147.3,185.1 L142.5,188.5 L135.5,187.9 Z" fill="#cfcfcf"/><path d="M135.1,180.1 L142.1,180.7 L146.9,177.5 M142.1,180.7 L142.5,188.5" fill="none"/><path d="M136.5,189.1 L143.5,189.5 L148.1,186.1" fill="none" stroke="#d4d4d4" stroke-width="1.2"/></g>
<g fill="#fafafa" stroke="#b0b0b0" stroke-width="0.9"><path d="M106.6,199.6 L111,196.6 L117.6,197 L118,203.6 L113.4,206.4 L107,206 Z"/><path d="M111.6,203.6 L116.4,200.4 L123.4,201 L123.8,208.6 L119,212 L112,211.4 Z" fill="#d2d2d2"/><path d="M111.6,203.6 L118.6,204.2 L123.4,201 M118.6,204.2 L119,212" fill="none"/><path d="M113,212.6 L120,213 L124.6,209.6" fill="none" stroke="#d4d4d4" stroke-width="1.2"/></g>
<g><circle cx="164" cy="129.1" r="6.5" fill="#fff" stroke="#111" stroke-width="1.1"/><path d="M155.4,129.1 L173,129.1" stroke="#111" stroke-width="1.1"/><path d="M165.4,120.8 L173.8,129.1 L165.4,137.6" fill="none" stroke="#111" stroke-width="1.5" stroke-linejoin="miter"/><path d="M164.6,119.6 L168.6,122.6 L164.6,124.6Z M164.6,138.8 L168.6,135.8 L164.6,133.8Z" fill="#111"/><text x="162.2" y="127.6" font-family="Liberation Sans, sans-serif" font-size="5" font-weight="bold" fill="#111">C</text><text x="160.4" y="134.6" font-family="Liberation Sans, sans-serif" font-size="4.6" font-weight="bold" fill="#111">P-5</text></g>
<rect x="177.5" y="118" width="23.5" height="24" fill="#f9f9f9"/><path d="M177.5,142 L177.5,118.5 L201,118.5" fill="none" stroke="#b8b8b8"/>
<g><path d="M183,122 L195,124 L199,128.5 L198,135.5 L194.4,139.4 L185,136.6Z" fill="#c9c9c9"/><path d="M186,125.4 L189.4,123.6 L193,126.6 L193,134.4 L186.6,133.4Z" fill="#d8d8d8"/><path d="M194,125 L198.6,128.6 L198,135 L194.4,138.6Z" fill="#aaa"/><path d="M182.6,121.4 L194.6,123.6 L194.8,139.6 L185,137Z" fill="none" stroke="#e0506a" stroke-width="1.4" stroke-linejoin="round"/></g>
<g><path d="M159.6,151.6 L164.6,146.4 L169.6,149.6 L175,151.6 L175,158.6 L168,162.6 L160.6,160.6Z" fill="#cdcdcd"/><path d="M162,152.6 L164.8,149.6 L167.6,152 L167.8,159.4 L162.4,158.4Z" fill="#b4b4b4"/><path d="M169.6,149.6 L175,151.6 L175,158.6 L169.6,161.4Z" fill="#aaa"/><path d="M159.8,151.8 L164.6,146.6 L169.4,150.4 L169.6,162 L160.6,160.4Z" fill="none" stroke="#e0506a" stroke-width="1.3" stroke-linejoin="round"/><path d="M157.6,146 L161,149.6 M166.6,161.6 L170.6,163.6" stroke="#e0506a" stroke-width="1"/></g>
</svg><!--/ICONS-->

<!-- VIEWPORT -->
<div class="abs" style="left:202px;top:111px;width:795px;height:640px;box-sizing:border-box;border-left:1px solid #8a8a8a;border-top:1px solid #7e7e7e;border-right:2px solid #fbfbfb;border-bottom:1px solid #fff;"></div>
<div class="abs" id="viewport">
<svg width="792" height="638" viewBox="203 112 792 638">
<defs>
<linearGradient id="sky" x1="0" y1="112" x2="0" y2="377" gradientUnits="userSpaceOnUse">
<stop offset="0" stop-color="#6fc3fa"/>
<stop offset="0.64" stop-color="#a6d9f8"/>
<stop offset="1" stop-color="#dbeefb"/>
</linearGradient>
</defs>
<rect x="203" y="112" width="792" height="265" fill="url(#sky)"/>
<rect x="203" y="376.5" width="792" height="374" fill="#9abd90"/>

<!-- house fill -->
<polygon points="688.5,130.5 926,281.5 923.5,431 920.5,618 220.5,616.5 217,431 443.5,431 443.5,281.5" fill="#fff"/>
<!-- red roof band + wall -->
<polygon points="443.2,281.5 688.5,130.5 688.5,142.5 462.5,282 462.3,299 460.6,299 461.3,430.6 444.6,430.6" fill="#ff0000"/>
<g fill="none" stroke="#111" stroke-width="1" stroke-linecap="butt" shape-rendering="crispEdges">
<!-- roof -->
<polyline points="443.2,281.5 688.5,130.5 926,281.5"/>
<polyline points="462.5,282 688.5,142.5 891,272"/>
<line x1="688.5" y1="130.5" x2="688.5" y2="142.5" stroke="#5a0000"/>
<!-- upper floor -->
<line x1="462" y1="282.2" x2="926" y2="281.3"/>
<polyline points="926,281.5 923.5,431 920.5,618"/>
<polygon points="460.6,299 909,298 907,414.3 461,414.3"/>
<line x1="443.6" y1="281.5" x2="444.8" y2="431" stroke="#7a0000"/>
<line x1="462.4" y1="282" x2="462.3" y2="299" stroke="#a00000"/>
<!-- mid line -->
<line x1="217" y1="431" x2="923.5" y2="431"/>
<!-- lower floor -->
<polyline points="217,431 220.5,616.5"/>
<polygon points="234,448 906.5,448 903.5,617.6 237,616.8" stroke="#333"/>
</g>
<!-- axes -->
<line x1="220.5" y1="616.7" x2="995" y2="618.2" stroke="#53a653" stroke-width="1.3"/>
<line x1="210.6" y1="112" x2="217" y2="431" stroke="#1c4fb0" stroke-width="1.2"/>
<line x1="217" y1="431" x2="220.5" y2="616.5" stroke="#1c3a70" stroke-width="1" opacity="0.6"/>
<line x1="220.5" y1="617" x2="203" y2="628" stroke="#b5532a" stroke-width="1"/>
<line x1="220.7" y1="619" x2="223.2" y2="750" stroke="#2a4f5c" stroke-width="1.1" stroke-dasharray="1.2,2.8"/>
<!-- vertex dots -->
<g fill="#000">
<rect x="442.2" y="280.3" width="2.4" height="2.4"/>
<rect x="924.8" y="280.3" width="2.6" height="2.6"/>
<rect x="215.7" y="429.7" width="2.6" height="2.6"/>
<rect x="443.5" y="429.7" width="2.6" height="2.6"/>
<rect x="919.5" y="617" width="2.4" height="2.4"/>
<rect x="523" y="616.5" width="2.4" height="2"/>
</g>
<!-- leaders -->
<g fill="none" stroke="#14202e" stroke-width="0.95">
<polyline points="224.9,461 334,180.4 918,343"/>
<line x1="394" y1="253.6" x2="444" y2="299"/>
<line x1="444" y1="299" x2="454" y2="308" stroke="#a00000"/>
<polyline points="337.6,282 349,282 527,441"/>
<line x1="330.4" y1="371.2" x2="409.3" y2="438.4"/>
</g>
<polygon points="365.6,296.6 359.6,294.6 362.6,291.4" fill="#222"/>
<!-- labels -->
<g font-family="Liberation Sans, sans-serif" font-size="13" fill="#37607f" fill-opacity="0.9">
<text x="333.6" y="177.4" textLength="86.4" lengthAdjust="spacingAndGlyphs">несущие стены</text>
<text x="391.6" y="250.8" textLength="87.4" lengthAdjust="spacingAndGlyphs">стена в кирпич</text>
<text x="290" y="287.6" textLength="34.4" lengthAdjust="spacingAndGlyphs">ПК 60</text>
<text x="321.6" y="372.6" textLength="73" lengthAdjust="spacingAndGlyphs">ПК 43 А-800</text>
</g>

</svg>
</div>

<!-- STATUS BAR -->
<div class="abs" style="left:2px;top:750px;width:995px;height:26px;background:#f0f0f0;border-top:1px solid #fff;box-sizing:border-box;"></div><div class="abs" style="left:3px;top:749px;width:199px;height:1px;background:#b8b8b8;"></div><div class="abs" style="left:6px;top:753px;width:1px;height:20px;background:#d0d0d0;"></div><div class="abs" style="left:198px;top:752px;width:1px;height:23px;background:#b4b4b4;"></div><div class="abs" style="left:197px;top:752px;width:1px;height:23px;background:#fcfcfc;"></div>
<div class="abs" style="left:81px;top:754px;width:115px;height:17px;box-sizing:border-box;border:1px solid #a0a0a0;border-top:1.5px solid #8e8e8e;border-right-color:#dcdcdc;border-bottom-color:#e4e4e4;background:#f1f1f1;"></div>

<!-- WINDOW BORDERS -->
<div class="abs" style="left:3px;top:20px;width:2px;height:757px;background:#f8f8f8;"></div>
<div class="abs" style="left:995px;top:20px;width:2px;height:757px;background:#f6fbf8;"></div>
<div class="abs" style="left:0;top:0;width:2px;height:2px;background:#e8e8ee;border-radius:0 0 2px 0;"></div>
<div class="abs" style="left:998px;top:0;width:2px;height:2px;background:#e8e8ee;border-radius:0 0 0 2px;"></div>
<div class="abs" id="lborder"></div>
<div class="abs" id="rborder"></div>
<div class="abs" id="bborder"></div>

<!-- TASKBAR -->
<div class="abs" id="taskbar"></div>
<!--TASKITEMS--><svg class="abs" style="left:0;top:0;will-change:transform" width="1000" height="800" viewBox="0 0 1000 800">
<g><path d="M8,14 L12,5.6 L16.2,8.6 L12.4,16.6Z" fill="#c8382a" stroke="#6a1810" stroke-width="0.6"/><path d="M9.6,12.4 L12.6,7.4 L14.6,8.8 L11.6,14Z" fill="#f0d8b0"/><path d="M7.4,15 L10,16.6 L12,17.6" stroke="#ddd" stroke-width="0.8" fill="none"/></g>
<rect x="953.5" y="5.5" width="11" height="11" rx="1.5" fill="#3a3a3a" stroke="#6a6a6a"/><rect x="955.5" y="13" width="5" height="2.2" fill="#fff"/>
<rect x="968.5" y="5.5" width="11" height="11" rx="1.5" fill="#3a3a3a" stroke="#777"/><rect x="970.5" y="8" width="7" height="6.5" fill="#2a2a2a" stroke="#fff" stroke-width="1.4"/>
<rect x="983.5" y="5.5" width="11" height="11" rx="1.5" fill="#c2604c" stroke="#e0b0a4"/><path d="M985.6,7.6 L992.4,14.4 M992.4,7.6 L985.6,14.4" stroke="#fbeee8" stroke-width="1.5"/>
<defs><linearGradient id="tbg" x1="0" y1="0" x2="0" y2="1"><stop offset="0" stop-color="#4e4e4e"/><stop offset="0.5" stop-color="#343434"/><stop offset="1" stop-color="#262626"/></linearGradient></defs>
<rect x="40.5" y="781.5" width="123" height="18" rx="1.5" fill="url(#tbg)" stroke="#1a1a1a"/><path d="M41.5,782.5 L162.5,782.5" stroke="#6a6a6a" stroke-opacity="0.7"/>
<rect x="166.5" y="781.5" width="122" height="18" rx="1.5" fill="url(#tbg)" stroke="#1a1a1a"/><path d="M167.5,782.5 L287.5,782.5" stroke="#6a6a6a" stroke-opacity="0.7"/>
<rect x="290.5" y="781.5" width="122" height="18" rx="1.5" fill="url(#tbg)" stroke="#1a1a1a"/><path d="M291.5,782.5 L411.5,782.5" stroke="#6a6a6a" stroke-opacity="0.7"/>
<rect x="414.5" y="781.5" width="123" height="18" rx="1.5" fill="url(#tbg)" stroke="#1a1a1a"/><path d="M415.5,782.5 L536.5,782.5" stroke="#6a6a6a" stroke-opacity="0.7"/>
<rect x="539.5" y="781.5" width="122" height="18" rx="1.5" fill="#0c0c0c" stroke="#000"/><path d="M540,799 L661,799" stroke="#3a3a3a"/>
<rect x="664.5" y="781.5" width="122" height="18" rx="1.5" fill="url(#tbg)" stroke="#1a1a1a"/><path d="M665.5,782.5 L785.5,782.5" stroke="#6a6a6a" stroke-opacity="0.7"/>
<g transform="translate(0.8,-0.6)"><path d="M9,785.6 C11,784 13,784 14.6,785 L13.6,789.6 C12,788.6 10,788.8 8.4,790Z" fill="#e0502a"/><path d="M15.6,785.4 C17.6,786.4 19.6,786 21.4,784.8 L20.4,789.6 C18.6,790.8 16.6,790.8 14.6,790Z" fill="#7ac03a"/><path d="M8,791.2 C9.8,789.8 11.8,789.8 13.4,790.8 L12.4,795.4 C10.8,794.4 8.8,794.6 7.2,795.8Z" fill="#3a8ae0"/><path d="M14.4,791.2 C16.4,792 18.4,791.8 20.2,790.6 L19.2,795.4 C17.4,796.6 15.4,796.6 13.4,795.8Z" fill="#f4c020"/></g>
<rect x="31.0" y="784" width="1.6" height="1.6" fill="#5a5a5a"/>
<rect x="32.5" y="787.5" width="1.6" height="1.6" fill="#5a5a5a"/>
<rect x="31.0" y="791" width="1.6" height="1.6" fill="#5a5a5a"/>
<rect x="32.5" y="794.5" width="1.6" height="1.6" fill="#5a5a5a"/>
<rect x="883.5" y="784" width="1.6" height="1.6" fill="#5a5a5a"/>
<rect x="885.0" y="787.5" width="1.6" height="1.6" fill="#5a5a5a"/>
<rect x="883.5" y="791" width="1.6" height="1.6" fill="#5a5a5a"/>
<rect x="885.0" y="794.5" width="1.6" height="1.6" fill="#5a5a5a"/>
<path d="M46.5,784 L50,783.2 L51,785 L55.6,784.6 L55.6,796 L46.5,796.6Z" fill="#e8c85a" stroke="#a88a2a" stroke-width="0.6"/><path d="M49.6,786 L55.6,785 L55.6,796 L49.6,797Z" fill="#f6e08a"/>
<rect x="172.5" y="784" width="12" height="12" rx="1" fill="#3f9a4a" stroke="#cfe8cf" stroke-width="0.9"/><path d="M175.4,786.6 L181.6,793.6 M181.6,786.6 L175.4,793.6" stroke="#fff" stroke-width="1.7"/>
<path d="M280.6,788.4 L285.4,788.4 L283,791.2Z" fill="#eee"/>
<circle cx="302.6" cy="790" r="6.3" fill="#e87a18"/><circle cx="303.6" cy="788.6" r="3.2" fill="#3f5fc4"/><path d="M296.6,787.4 C297.6,792.6 302,794.6 306.6,791.6 C307.6,790.6 308,789.6 308,788.6 C309.4,792.6 306.6,796.4 302.4,796.4 C298.4,796.4 295.6,792 296.6,787.4Z" fill="#f6b828"/><path d="M297.4,786 C299,784 302.6,783.4 305,784.4 C302.4,784.8 300.4,786 300.4,788.4 L298.4,789Z" fill="#f29a1c"/><path d="M297.6,791 C299,793.6 302.6,794 305,792.4" stroke="#c4500c" stroke-width="0.8" fill="none"/>
<rect x="420.5" y="783.5" width="12" height="8" rx="1.5" fill="#2ab4a8" stroke="#d8f4f0" stroke-width="0.8"/><text x="422" y="790" font-family="Liberation Sans, sans-serif" font-size="6" font-weight="bold" fill="#fff">BT</text><path d="M421.6,792 L426.6,797.6 L431.6,792Z" fill="#fff" stroke="#4a6ac8" stroke-width="0.8"/><path d="M423.4,792.6 L427,796 M425.6,792.6 L428.6,795 M428,792.6 L430,794" stroke="#4a6ac8" stroke-width="0.6"/>
<path d="M547.6,793 L551.6,784.6 L556.4,787.2 L552.6,796.4Z" fill="#c8382a" stroke="#f0d0c0" stroke-width="0.6"/><path d="M549.8,792 L552.6,786.6 L554.4,787.8 L551.6,793.4Z" fill="#f4e0c0"/>
<ellipse cx="676.5" cy="790.3" rx="5.6" ry="6.3" fill="#d8201c" stroke="#f08a80" stroke-width="0.7"/><ellipse cx="676.5" cy="790.3" rx="2.2" ry="4.3" fill="#5a0a0a"/><ellipse cx="676.5" cy="790.3" rx="1.5" ry="3.6" fill="#2e2e2e"/>
<rect x="893" y="785" width="10.5" height="11.5" fill="#8a8a8a"/><text x="894" y="794" font-family="Liberation Sans, sans-serif" font-size="8" font-weight="bold" fill="#fff" textLength="8.6" lengthAdjust="spacingAndGlyphs">RL</text>
<rect x="923" y="784" width="11.5" height="11.5" rx="2.4" fill="#2ab8d0" stroke="#1a8aa0" stroke-width="0.6"/><circle cx="928.6" cy="789.8" r="3.2" fill="#2ab8d0" stroke="#e8fbff" stroke-width="1.2"/><circle cx="928.6" cy="789.8" r="1.2" fill="#0a6a80"/>
<rect x="936.5" y="786" width="6" height="6" fill="#b8a0a8" stroke="#777" stroke-width="0.6"/><rect x="941.5" y="784.4" width="5.6" height="7" fill="#9a9a9a" stroke="#666" stroke-width="0.6"/><path d="M938,794.6 L944,794.6" stroke="#888" stroke-width="1.2"/>
<path d="M950.6,788 L952.6,788 L955.4,785 L955.4,795 L952.6,792 L950.6,792Z" fill="#f0f0f0"/><path d="M957.2,787.6 C958.4,789 958.4,791 957.2,792.4" stroke="#e8f0e0" stroke-width="0.9" fill="none"/><path d="M959.2,786 C961.2,788.4 961.2,791.6 959.2,794" stroke="#7ac06a" stroke-width="1" fill="none"/>
<g font-family="Liberation Sans, sans-serif">
<text x="21" y="15.1" font-size="11.5" fill="#fff" font-weight="bold" textLength="85" lengthAdjust="spacingAndGlyphs" style="paint-order:stroke" stroke="#000" stroke-opacity="0.35" stroke-width="0.8">3.skp - SketchUp</text>
<text x="7.5" y="30.8" font-size="11" fill="#151515" textLength="12" lengthAdjust="spacingAndGlyphs">File</text>
<text x="29" y="30.8" font-size="11" fill="#151515" textLength="14" lengthAdjust="spacingAndGlyphs">Edit</text>
<text x="53" y="30.8" font-size="11" fill="#151515" textLength="17" lengthAdjust="spacingAndGlyphs">View</text>
<text x="79" y="30.8" font-size="11" fill="#151515" textLength="29" lengthAdjust="spacingAndGlyphs">Camera</text>
<text x="117" y="30.8" font-size="11" fill="#151515" textLength="20" lengthAdjust="spacingAndGlyphs">Draw</text>
<text x="146" y="30.8" font-size="11" fill="#151515" textLength="20" lengthAdjust="spacingAndGlyphs">Tools</text>
<text x="175" y="30.8" font-size="11" fill="#151515" textLength="30" lengthAdjust="spacingAndGlyphs">Window</text>
<text x="214" y="30.8" font-size="11" fill="#151515" textLength="17" lengthAdjust="spacingAndGlyphs">Help</text>
<text x="28" y="102.6" font-size="11" fill="#111" textLength="25" lengthAdjust="spacingAndGlyphs">Layer0</text>
<text x="21" y="766.8" font-size="11" fill="#151515" textLength="55" lengthAdjust="spacingAndGlyphs">Measurements</text>
<text x="60" y="794.3" font-size="10.5" fill="#f0f0f0" textLength="88" lengthAdjust="spacingAndGlyphs">D:\РОБОЧА ПАПКА\...</text>
<text x="186" y="794.3" font-size="10.5" fill="#fff" font-weight="bold" textLength="5.5" lengthAdjust="spacingAndGlyphs">9</text>
<text x="194" y="794.3" font-size="10.5" fill="#f0f0f0" textLength="76" lengthAdjust="spacingAndGlyphs">Microsoft Office E...</text>
<text x="311" y="794.3" font-size="10.5" fill="#f0f0f0" textLength="84" lengthAdjust="spacingAndGlyphs">Вхідні - Mozilla Firefox</text>
<text x="436" y="794.3" font-size="10.5" fill="#f0f0f0" textLength="88" lengthAdjust="spacingAndGlyphs">BarTender RFID Ente...</text>
<text x="561" y="794.3" font-size="10.5" fill="#fff" textLength="65" lengthAdjust="spacingAndGlyphs">3.skp - SketchUp</text>
<text x="686" y="794.3" font-size="10.5" fill="#f0f0f0" textLength="90" lengthAdjust="spacingAndGlyphs">Экспресс-панель - О...</text>
<text x="968" y="794.6" font-size="10.5" fill="#f4f4f4" textLength="20.5" lengthAdjust="spacingAndGlyphs">15:44</text>
</g>
</svg><!--/TASKITEMS-->
</body>
</html>
